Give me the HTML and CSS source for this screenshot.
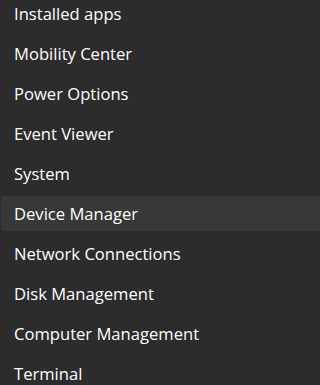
FILE: index.html
```html
<!DOCTYPE html>
<html>
<head>
<meta charset="utf-8">
<link rel="stylesheet" href="styles.css">
</head>
<body>
<ul class="menu">
  <li class="item">Installed apps</li>
  <li class="item">Mobility Center</li>
  <li class="item">Power Options</li>
  <li class="item">Event Viewer</li>
  <li class="item">System</li>
  <li class="item active">Device Manager</li>
  <li class="item">Network Connections</li>
  <li class="item">Disk Management</li>
  <li class="item">Computer Management</li>
  <li class="item">Terminal</li>
</ul>
</body>
</html>
```
FILE: styles.css
```css
html, body {
  margin: 0;
  padding: 0;
  background: #2c2c2c;
  height: 385px;
  overflow: hidden;
}
.menu {
  list-style: none;
  margin: -4px 0 0 0;
  padding: 0 0 0 1px;
  display: flex;
  flex-direction: column;
  gap: 5px;
}
.item {
  height: 35px;
  display: flex;
  align-items: center;
  padding-left: 13px;
  border-radius: 4px 0 0 4px;
  font-family: "Open Sans", sans-serif;
  font-size: 16.6px;
  color: #ffffff;
  white-space: nowrap;
}
.item.active {
  background: #383838;
}
```
